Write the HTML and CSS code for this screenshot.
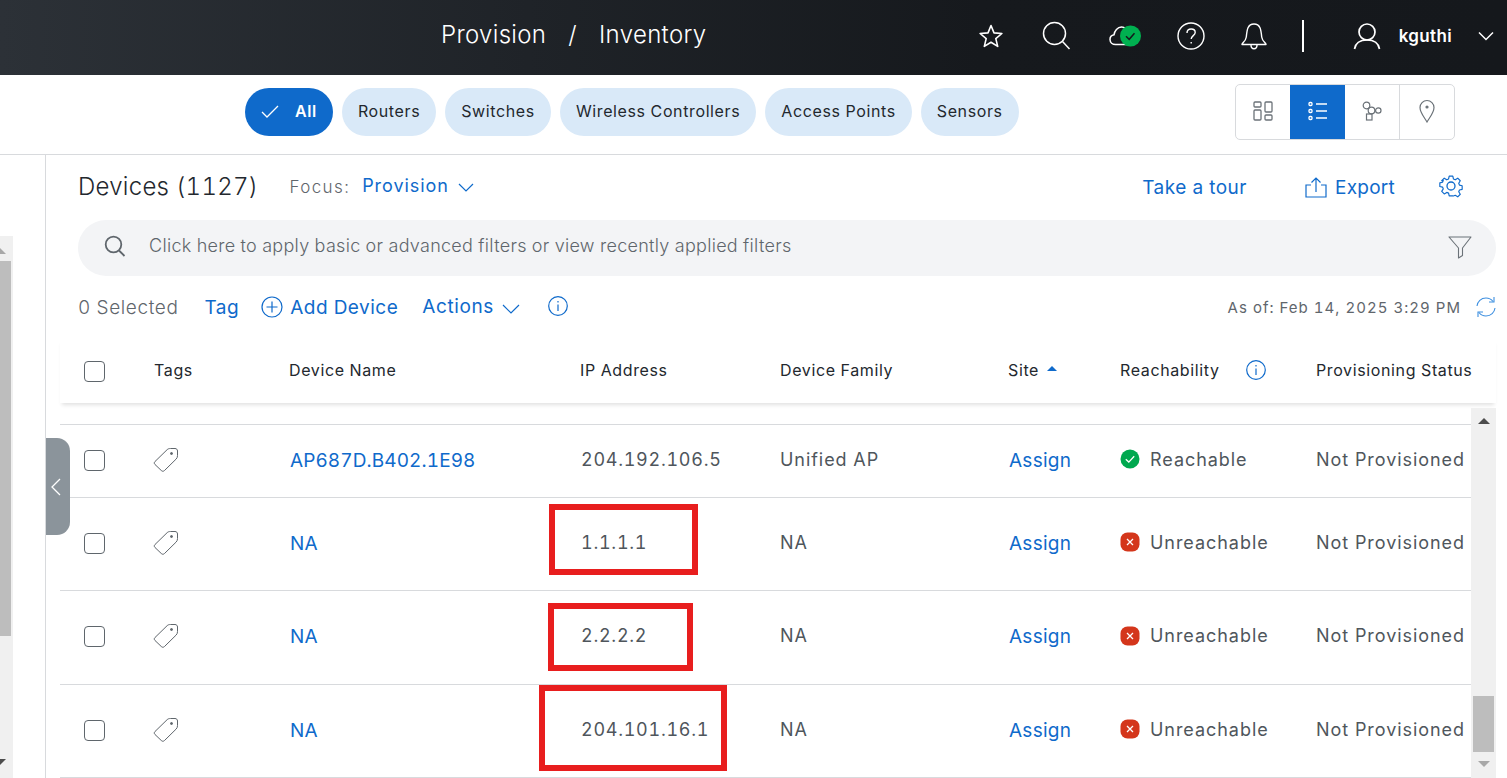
FILE: index.html
```html
<!DOCTYPE html>
<html lang="en">
<head>
    <meta charset="UTF-8">
    <meta name="viewport" content="width=device-width, initial-scale=1.0">
    <title>Provision / Inventory</title>
    <link rel="stylesheet" href="styles.css">
</head>
<body>
    <div class="page">
        <!-- Top bar -->
        <header class="topbar">
            <div class="crumbs"><span>Provision</span><span class="crumb-sep">/</span><span>Inventory</span></div>
            <div class="top-icons">
                <svg class="ic-star" width="26" height="26" viewBox="0 0 26 26" fill="none" stroke="#fff" stroke-width="1.6" stroke-linejoin="round"><path d="M13 2.500l3 7.400 7.900.6-6.100 5.100 1.900 7.800L13 19.200 6.300 23.400l1.900-7.800L2.100 10.500l7.900-.6z"/></svg>
                <svg class="ic-search" width="30" height="30" viewBox="0 0 30 30" fill="none" stroke="#fff" stroke-width="1.500"><circle cx="12.500" cy="12.500" r="11"/><path d="M20.500 20.500l7 7.500"/></svg>
                <svg class="ic-cloud" width="33" height="24" viewBox="0 0 33 24" fill="none"><path d="M19 20.500H6.500C3.500 20.500 1 18.500 1 15.500c0-2.500 1.700-4.300 4-4.700C5.500 7 8.500 3 12.500 3c1.800 0 3 .6 4 1.700" stroke="#fff" stroke-width="1.500"/><circle cx="21.500" cy="12" r="10.500" fill="#00b050"/><path d="M17 12.300l3.200 3 5.300-6" fill="none" stroke="#14181c" stroke-width="1.500"/></svg>
                <svg class="ic-help" width="28" height="28" viewBox="0 0 28 28" fill="none" stroke="#fff" stroke-width="1.400"><circle cx="14" cy="14" r="13"/><path d="M10 11c0-2.500 1.800-4 4.200-4 2.300 0 4 1.500 4 3.500 0 3-4 3.300-4 6.500"/><path d="M14.200 20v1.500"/></svg>
                <svg class="ic-bell" width="28" height="28" viewBox="0 0 28 28" fill="none" stroke="#fff" stroke-width="1.400" stroke-linejoin="round"><path d="M2 22.500c0-1.500 3.700-3 4.300-7.500C7 8 7.500 2 14 2s7 6 7.700 13c.6 4.500 4.300 6 4.300 7.500z"/><path d="M11 23c0 5 6 5 6 0"/></svg>
                <span class="top-divider"></span>
                <svg class="ic-user" width="28" height="28" viewBox="0 0 28 28" fill="none" stroke="#fff" stroke-width="1.700"><circle cx="14" cy="10" r="8"/><path d="M1.500 27c1-6 5.500-9 12.500-9s11.500 3 12.500 9"/></svg>
                <span class="username">kguthi</span>
                <svg class="ic-down" width="16" height="10" viewBox="0 0 16 10" fill="none" stroke="#fff" stroke-width="1.500"><path d="M1 1.500l7 7 7-7"/></svg>
            </div>
        </header>

        <!-- Device type chips and view switch -->
        <div class="filterbar">
            <div class="chips">
                <span class="chip chip-on">
                    <svg width="18" height="13" viewBox="0 0 18 13" fill="none" stroke="#fff" stroke-width="1.300"><path d="M1 7l5 5L17 1"/></svg>
                    All
                </span>
                <span class="chip">Routers</span>
                <span class="chip">Switches</span>
                <span class="chip">Wireless Controllers</span>
                <span class="chip">Access Points</span>
                <span class="chip">Sensors</span>
            </div>
            <div class="views">
                <span class="view">
                    <svg width="20" height="20" viewBox="0 0 20 20" fill="none" stroke="#6b7278" stroke-width="1.300"><rect x="1" y="1" width="7" height="5" rx="1"/><rect x="12" y="1" width="7" height="10" rx="1"/><rect x="1" y="9" width="7" height="10" rx="1"/><rect x="12" y="14" width="7" height="5" rx="1"/></svg>
                </span>
                <span class="view view-on">
                    <svg width="20" height="20" viewBox="0 0 20 20" fill="none" stroke="#fff" stroke-width="1.300"><rect x="1" y="1.500" width="3" height="3" rx="1"/><rect x="1" y="8.500" width="3" height="3" rx="1"/><rect x="1" y="15.500" width="3" height="3" rx="1"/><path d="M8 3h11M8 10h11M8 17h11"/></svg>
                </span>
                <span class="view view-line">
                    <svg width="20" height="20" viewBox="0 0 20 20" fill="none" stroke="#6b7278" stroke-width="1.200"><circle cx="4.500" cy="4.500" r="3.300"/><circle cx="9.500" cy="9.500" r="3.300"/><circle cx="16.300" cy="9.500" r="2.700"/><rect x="4.500" y="13" width="5.500" height="6"/></svg>
                </span>
                <span class="view">
                    <svg width="16" height="24" viewBox="0 0 16 24" fill="none" stroke="#6b7278" stroke-width="1.200"><path d="M8 23C5 18 1 13.500 1 8.500a7 7 0 0 1 14 0C15 13.500 11 18 8 23z"/><circle cx="8" cy="8" r="1" fill="#6b7278"/></svg>
                </span>
            </div>
        </div>

        <div class="body">
            <!-- Collapsed left panel -->
            <aside class="side">
                <div class="side-scroll">
                    <span class="arrow-up arrow-light"></span>
                    <span class="side-thumb"></span>
                    <span class="arrow-down arrow-dark"></span>
                </div>
            </aside>

            <main class="content">
                <div class="title-row">
                    <h1>Devices (1127)</h1>
                    <span class="focus-label">Focus:</span>
                    <span class="link focus-value">Provision</span>
                    <svg class="chev" width="16" height="9" viewBox="0 0 16 9" fill="none" stroke="#0f6acb" stroke-width="1.200"><path d="M1 1l7 7 7-7"/></svg>
                    <span class="link tour">Take a tour</span>
                    <svg class="export-ic" width="22" height="21" viewBox="0 0 22 21" fill="none" stroke="#0f6acb" stroke-width="1.200"><path d="M6 8H1v12h20V8h-5"/><path d="M11 15V1M6.500 5.500L11 1l4.500 4.500"/></svg>
                    <span class="link export">Export</span>
                    <svg class="gear" width="24" height="24" viewBox="0 0 24 24" fill="none" stroke="#0f6acb" stroke-width="1.300" stroke-linejoin="round"><circle cx="12" cy="12" r="4"/><path d="M10 1h4l.7 3.200 2 .9 2.800-1.800 2.800 2.900-1.700 2.700.8 2.100 3 .7v4l-3 .7-.8 2 1.700 2.800-2.800 2.800-2.800-1.700-2 .8L14 23h-4l-.7-3.100-2-.8-2.800 1.700-2.800-2.800 1.700-2.800-.8-2-3-.7v-4l3-.7.800-2.100L1.700 6.200l2.800-2.900 2.800 1.800 2-.9z" transform="translate(1.200 1.200) scale(.9)"/></svg>
                </div>

                <div class="searchbar">
                    <svg class="search-ic" width="22" height="22" viewBox="0 0 22 22" fill="none" stroke="#5f666c" stroke-width="1.800"><circle cx="9.500" cy="9.500" r="7.800"/><path d="M15 15.500l5.500 5.500"/></svg>
                    <span class="search-text">Click here to apply basic or advanced filters or view recently applied filters</span>
                    <svg class="funnel" width="24" height="24" viewBox="0 0 24 24" fill="none" stroke="#6b7278" stroke-width="1.100" stroke-linejoin="round"><path d="M1 2h22l-8.500 11v7.500L10.500 23V13z"/></svg>
                </div>

                <div class="tools">
                    <span class="selected">0 Selected</span>
                    <span class="link tag-link">Tag</span>
                    <svg class="plus" width="22" height="22" viewBox="0 0 22 22" fill="none" stroke="#0f6acb" stroke-width="1.200"><circle cx="11" cy="11" r="10"/><path d="M11 5.500v11M5.500 11h11"/></svg>
                    <span class="link add-link">Add Device</span>
                    <span class="link actions-link">Actions</span>
                    <svg class="chev" width="18" height="10" viewBox="0 0 18 10" fill="none" stroke="#0f6acb" stroke-width="1.200"><path d="M1 1l8 8 8-8"/></svg>
                    <svg class="info info-tools" width="20" height="20" viewBox="0 0 20 20" fill="none" stroke="#0f6acb" stroke-width="1.200"><circle cx="10" cy="10" r="9.300"/><path d="M10 8.500V15M10 5v1.500"/></svg>
                    <span class="as-of">As of: Feb 14, 2025 3:29 PM</span>
                    <svg class="refresh" width="20" height="20" viewBox="0 0 20 20" fill="none" stroke="#3d8fe0" stroke-width="1.100"><path d="M1 9c.5-4.500 4-8 9-8 3 0 5.500 1.500 7 3.500M19 11c-.5 4.500-4 8-9 8-3 0-5.500-1.500-7-3.500"/><path d="M18 0v5h-5M2 20v-5h5"/></svg>
                </div>

                <div class="table">
                    <div class="grid thead">
                        <span class="cell-check"><span class="checkbox"></span></span>
                        <span>Tags</span>
                        <span>Device Name</span>
                        <span>IP Address</span>
                        <span>Device Family</span>
                        <span class="site-head">Site<span class="sort-up"></span></span>
                        <span class="reach-head">Reachability
                            <svg class="info" width="20" height="20" viewBox="0 0 20 20" fill="none" stroke="#0f6acb" stroke-width="1.200"><circle cx="10" cy="10" r="9.300"/><path d="M10 8.500V15M10 5v1.500"/></svg>
                        </span>
                        <span>Provisioning Status</span>
                    </div>

                    <div class="tbody">
                        <div class="tbody-top"></div>
                        <div class="grid row row-first">
                            <span class="cell-check"><span class="checkbox"></span></span>
                            <span class="tag-cell"><svg width="26" height="26" viewBox="0 0 26 26" fill="none" stroke="#5f666c" stroke-width="1"><path d="M2 14.500L14 2.800c1-1 2-1.300 3.500-1.300H22c1.500 0 2.500 1 2.500 2.500v4.500c0 1.500-.4 2.500-1.300 3.500L11.500 23.500c-1 1-2.200 1-3.200 0L2 17.500c-1-.9-1-2.100 0-3z"/><circle cx="18.500" cy="6.500" r="1" fill="#5f666c"/></svg></span>
                            <span class="link name">AP687D.B402.1E98</span>
                            <span class="ip">204.192.106.5</span>
                            <span>Unified AP</span>
                            <span class="link assign">Assign</span>
                            <span class="status">
                                <svg width="20" height="20" viewBox="0 0 20 20"><circle cx="10" cy="10" r="9.500" fill="#00a84f"/><path d="M5.800 10.300l3 2.800 5.400-5.800" fill="none" stroke="#fff" stroke-width="1.300"/></svg>
                                Reachable
                            </span>
                            <span>Not Provisioned</span>
                        </div>
                        <div class="grid row">
                            <span class="cell-check"><span class="checkbox"></span></span>
                            <span class="tag-cell"><svg width="26" height="26" viewBox="0 0 26 26" fill="none" stroke="#5f666c" stroke-width="1"><path d="M2 14.500L14 2.800c1-1 2-1.300 3.500-1.300H22c1.500 0 2.500 1 2.500 2.500v4.500c0 1.500-.4 2.500-1.300 3.500L11.500 23.500c-1 1-2.200 1-3.200 0L2 17.500c-1-.9-1-2.100 0-3z"/><circle cx="18.500" cy="6.500" r="1" fill="#5f666c"/></svg></span>
                            <span class="link name">NA</span>
                            <span class="ip">1.1.1.1</span>
                            <span>NA</span>
                            <span class="link assign">Assign</span>
                            <span class="status">
                                <svg width="20" height="20" viewBox="0 0 20 20"><rect x=".5" y=".5" width="19" height="19" rx="7" fill="#d4361b"/><path d="M7 7l6 6M13 7l-6 6" fill="none" stroke="#fff" stroke-width="1.300"/></svg>
                                Unreachable
                            </span>
                            <span>Not Provisioned</span>
                        </div>
                        <div class="grid row row-tall">
                            <span class="cell-check"><span class="checkbox"></span></span>
                            <span class="tag-cell"><svg width="26" height="26" viewBox="0 0 26 26" fill="none" stroke="#5f666c" stroke-width="1"><path d="M2 14.500L14 2.800c1-1 2-1.300 3.500-1.300H22c1.500 0 2.500 1 2.500 2.500v4.500c0 1.500-.4 2.500-1.300 3.500L11.500 23.500c-1 1-2.200 1-3.200 0L2 17.500c-1-.9-1-2.100 0-3z"/><circle cx="18.500" cy="6.500" r="1" fill="#5f666c"/></svg></span>
                            <span class="link name">NA</span>
                            <span class="ip">2.2.2.2</span>
                            <span>NA</span>
                            <span class="link assign">Assign</span>
                            <span class="status">
                                <svg width="20" height="20" viewBox="0 0 20 20"><rect x=".5" y=".5" width="19" height="19" rx="7" fill="#d4361b"/><path d="M7 7l6 6M13 7l-6 6" fill="none" stroke="#fff" stroke-width="1.300"/></svg>
                                Unreachable
                            </span>
                            <span>Not Provisioned</span>
                        </div>
                        <div class="grid row">
                            <span class="cell-check"><span class="checkbox"></span></span>
                            <span class="tag-cell"><svg width="26" height="26" viewBox="0 0 26 26" fill="none" stroke="#5f666c" stroke-width="1"><path d="M2 14.500L14 2.800c1-1 2-1.300 3.500-1.300H22c1.500 0 2.500 1 2.500 2.500v4.500c0 1.500-.4 2.500-1.300 3.500L11.500 23.500c-1 1-2.200 1-3.200 0L2 17.500c-1-.9-1-2.100 0-3z"/><circle cx="18.500" cy="6.500" r="1" fill="#5f666c"/></svg></span>
                            <span class="link name">NA</span>
                            <span class="ip">204.101.16.1</span>
                            <span>NA</span>
                            <span class="link assign">Assign</span>
                            <span class="status">
                                <svg width="20" height="20" viewBox="0 0 20 20"><rect x=".5" y=".5" width="19" height="19" rx="7" fill="#d4361b"/><path d="M7 7l6 6M13 7l-6 6" fill="none" stroke="#fff" stroke-width="1.300"/></svg>
                                Unreachable
                            </span>
                            <span>Not Provisioned</span>
                        </div>

                        <div class="table-scroll">
                            <span class="arrow-up arrow-dark"></span>
                            <span class="table-thumb"></span>
                            <span class="arrow-down arrow-grey"></span>
                        </div>
                    </div>
                </div>
            </main>

            <div class="side-tab">
                <svg width="11" height="18" viewBox="0 0 11 18" fill="none" stroke="#fff" stroke-width="1.300"><path d="M10 1L2 9l8 8"/></svg>
            </div>
        </div>

        <!-- Red boxes drawn on top of the screenshot -->
        <div class="mark mark-1"></div>
        <div class="mark mark-2"></div>
        <div class="mark mark-3"></div>
    </div>
</body>
</html>
```

FILE: styles.css
```css
html, body {
    margin: 0;
    padding: 0;
}
body {
    font-family: Inter, "Noto Sans", sans-serif;
    font-variant-numeric: tabular-nums;
    color: #23282e;
    background: #fff;
}
.page {
    position: relative;
    width: 1507px;
    height: 778px;
    overflow: hidden;
    display: flex;
    flex-direction: column;
}
.link {
    color: #0f6acb;
}

/* Top bar */
.topbar {
    flex: none;
    height: 75px;
    display: flex;
    align-items: center;
    padding-left: 441px;
    background: linear-gradient(90deg, #2c3137 0%, #1f2328 35%, #16191d 65%, #15181c 100%);
    color: #fff;
}
.crumbs {
    font-size: 24px;
    font-weight: 300;
    letter-spacing: 0.33px;
    display: flex;
    margin-top: -6px;
}
.crumb-sep {
    margin: 0 22px;
}
.top-icons {
    margin-left: auto;
    display: flex;
    align-items: center;
    padding-right: 13px;
    margin-top: -4px;
}
.ic-search { margin-left: 38px; }
.ic-cloud { margin-left: 37px; }
.ic-help { margin-left: 35px; }
.ic-bell { margin-left: 35px; }
.top-divider {
    width: 2px;
    height: 32px;
    background: #fff;
    margin-left: 34px;
}
.ic-user { margin-left: 49px; }
.username {
    font-size: 17px;
    font-weight: 600;
    letter-spacing: 0.35px;
    margin-left: 18px;
}
.ic-down { margin-left: 26px; }

/* Chips */
.filterbar {
    flex: none;
    height: 79px;
    display: flex;
    align-items: flex-start;
    padding-left: 245px;
    padding-right: 52px;
    border-bottom: 1px solid #d8dadd;
}
.chips {
    display: flex;
    gap: 9px;
    margin-top: 13px;
}
.chip {
    height: 46px;
    padding: 0 16px 2px;
    display: flex;
    align-items: center;
    border-radius: 24px;
    background: #d9e9f8;
    font-size: 16px;
    letter-spacing: 0.62px;
    color: #23282e;
}
.chip-on {
    background: #0f6acb;
    color: #fff;
    font-weight: 600;
    gap: 16px;
}
.views {
    margin-left: auto;
    margin-top: 9px;
    height: 54px;
    display: flex;
    border: 1px solid #d8dadd;
    border-radius: 5px;
    overflow: hidden;
}
.view {
    width: 54px;
    display: flex;
    align-items: center;
    justify-content: center;
    margin-bottom: 2px;
}
.view-on {
    width: 55px;
    background: #0f6acb;
    margin-bottom: 0;
    padding-bottom: 2px;
}
.view-line {
    border-right: 1px solid #d8dadd;
    margin-bottom: 0;
    padding-bottom: 2px;
}

/* Body */
.body {
    flex: 1;
    display: flex;
    min-height: 0;
}
.side {
    flex: none;
    width: 45px;
    border-right: 1px solid #d8dadd;
    padding-top: 81px;
}
.side-scroll {
    width: 13px;
    height: 542px;
    background: #f0f0f0;
    display: flex;
    flex-direction: column;
    align-items: flex-start;
    overflow: hidden;
}
.side-thumb {
    width: 11px;
    height: 375px;
    margin-top: 7px;
    background: #bdbdbd;
}
.arrow-up, .arrow-down {
    flex: none;
    width: 0;
    height: 0;
    border-left: 6px solid transparent;
    border-right: 6px solid transparent;
}
.arrow-up { border-bottom: 6px solid #4c4c4c; }
.arrow-down { border-top: 6px solid #4c4c4c; }
.side-scroll .arrow-up {
    margin: 12px 0 0 -6px;
}
.side-scroll .arrow-down {
    margin: auto 0 13px -6px;
}
.arrow-light { border-bottom-color: #a8a8a8; }
.arrow-grey { border-top-color: #a8a8a8; }

.content {
    flex: 1;
    min-width: 0;
    padding-right: 11px;
}
.title-row {
    height: 65px;
    display: flex;
    align-items: center;
    padding-left: 32px;
}
h1 {
    margin: -2px 0 0;
    font-size: 24px;
    font-weight: 300;
    letter-spacing: 0.27px;
    color: #23282e;
}
.focus-label {
    margin-left: 31px;
    margin-top: -1px;
    font-size: 17px;
    font-weight: 300;
    color: #5f666c;
    letter-spacing: 1.4px;
}
.focus-value {
    margin-left: 12px;
    margin-top: -4px;
    font-size: 18px;
    letter-spacing: 0.95px;
}
.chev {
    margin-left: 9px;
}
.tour {
    margin-left: auto;
    font-size: 19px;
    letter-spacing: 0.5px;
}
.export-ic {
    margin-left: 58px;
    margin-top: -1px;
}
.export {
    margin-left: 8px;
    font-size: 19px;
    letter-spacing: 0.25px;
}
.gear {
    margin-left: 44px;
    margin-right: 33px;
    margin-top: -3px;
}

.searchbar {
    margin-left: 32px;
    height: 56px;
    display: flex;
    align-items: center;
    padding: 0 24px 0 26px;
    background: #f3f4f6;
    border-radius: 28px;
}
.search-ic {
    margin-top: -4px;
}
.search-text {
    margin-left: 23px;
    margin-top: -6px;
    font-size: 18px;
    font-weight: 300;
    letter-spacing: 0.29px;
    color: #5f666c;
}
.funnel {
    margin-left: auto;
    margin-top: -2px;
}

.tools {
    height: 62px;
    display: flex;
    align-items: center;
    padding-left: 32px;
    font-size: 19px;
    letter-spacing: 0.5px;
}
.selected {
    font-weight: 300;
    letter-spacing: 0.6px;
    color: #5f666c;
}
.tag-link { margin-left: 26px; }
.plus { margin-left: 22px; }
.add-link { margin-left: 7px; }
.actions-link {
    margin-left: 24px;
    margin-top: -2px;
    letter-spacing: 0.6px;
}
.tools .chev { margin-left: 8px; margin-top: 4px; }
.tools .info-tools { margin-left: 28px; margin-top: -3px; }
.as-of {
    margin-left: auto;
    font-size: 15px;
    letter-spacing: 1.02px;
    color: #5f666c;
}
.refresh {
    margin-left: 15px;
}

/* Table */
.table {
    margin-left: 14px;
}
.grid {
    display: grid;
    grid-template-columns: 94px 135px 291px 200px 228px 112px 196px 155px;
    align-items: center;
}
.thead {
    box-sizing: border-box;
    height: 65px;
    padding-bottom: 2px;
    font-size: 16px;
    font-weight: 400;
    letter-spacing: 0.62px;
    color: #23282e;
    white-space: nowrap;
    box-shadow: 0 4px 4px -2px rgba(0, 0, 0, 0.12);
}
.cell-check {
    padding-left: 24px;
    display: flex;
}
.thead .cell-check {
    margin-top: 3px;
}
.checkbox {
    width: 19px;
    height: 19px;
    border: 1px solid #5f666c;
    border-radius: 4px;
}
.site-head, .reach-head {
    display: flex;
    align-items: center;
}
.sort-up {
    width: 0;
    height: 0;
    margin-left: 8px;
    margin-bottom: 3px;
    border-left: 5px solid transparent;
    border-right: 5px solid transparent;
    border-bottom: 5px solid #0f6acb;
}
.info {
    margin-left: 26px;
}
.tbody {
    position: relative;
}
.tbody-top {
    height: 21px;
    border-bottom: 1px solid #d8dadd;
    margin-right: 25px;
}
.row {
    height: 92px;
    border-bottom: 1px solid #d8dadd;
    font-size: 18px;
    letter-spacing: 0.95px;
    color: #4f565c;
    margin-right: 25px;
}
.row > span {
    margin-bottom: 4px;
}
.row > .link, .row > .cell-check, .row > .tag-cell {
    margin-bottom: 2px;
}
.row-first {
    height: 72px;
}
.row-tall {
    height: 93px;
}
.row .ip {
    letter-spacing: 0.72px;
}
.row .link {
    font-size: 19px;
}
.row .name {
    letter-spacing: 0.1px;
}
.row .assign {
    letter-spacing: 0.25px;
}
.row .name, .row .assign, .row .ip {
    padding-left: 1px;
}
.tag-cell {
    display: flex;
}
.tag-cell svg {
    margin-left: -1px;
    margin-top: -1px;
}
.status {
    display: flex;
    align-items: center;
    gap: 10px;
}

/* Scrollbar of the table body, it lies over the right edge */
.table-scroll {
    position: absolute;
    top: 5px;
    right: 0;
    width: 25px;
    height: 370px;
    background: #f0f0f0;
    display: flex;
    flex-direction: column;
    align-items: center;
}
.table-scroll .arrow-up {
    margin-top: 10px;
}
.table-thumb {
    width: 21px;
    height: 56px;
    margin-top: auto;
    background: #bdbdbd;
}
.table-scroll .arrow-down {
    margin: 9px 0 11px;
}

/* Handle that collapses the left panel */
.side-tab {
    position: absolute;
    left: 46px;
    top: 438px;
    width: 24px;
    height: 97px;
    display: flex;
    align-items: center;
    justify-content: center;
    background: #8b949b;
    border-radius: 0 13px 13px 0;
}
.side-tab svg {
    margin-right: 6px;
}

/* Annotation boxes */
.mark {
    position: absolute;
    border: 6px solid #e81e1e;
    box-sizing: border-box;
}
.mark-1 { left: 549px; top: 504px; width: 149px; height: 71px; }
.mark-2 { left: 548px; top: 603px; width: 145px; height: 68px; }
.mark-3 { left: 539px; top: 685px; width: 188px; height: 86px; }
```
